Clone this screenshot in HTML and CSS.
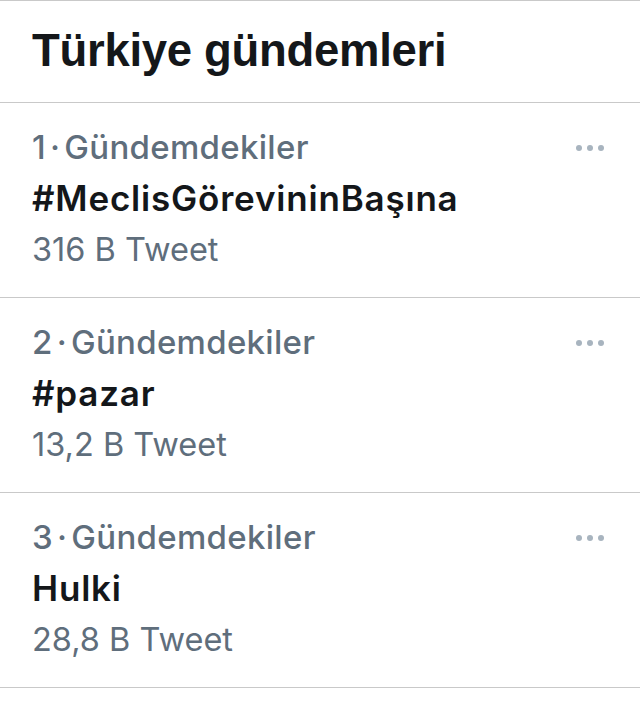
FILE: index.html
```html
<!DOCTYPE html>
<html lang="tr">
<head>
<meta charset="utf-8">
<link rel="stylesheet" href="styles.css">
</head>
<body>
<div class="panel">
  <header class="head">
    <h1 class="title">Türkiye gündemleri</h1>
  </header>
  <div class="trend">
    <div class="meta">1<span class="dot">·</span>Gündemdekiler</div>
    <div class="name">#MeclisGörevininBaşına</div>
    <div class="count">316 B Tweet</div>
    <span class="more"><i></i><i></i><i></i></span>
  </div>
  <div class="trend">
    <div class="meta">2<span class="dot">·</span>Gündemdekiler</div>
    <div class="name">#pazar</div>
    <div class="count">13,2 B Tweet</div>
    <span class="more"><i></i><i></i><i></i></span>
  </div>
  <div class="trend">
    <div class="meta">3<span class="dot">·</span>Gündemdekiler</div>
    <div class="name">Hulki</div>
    <div class="count">28,8 B Tweet</div>
    <span class="more"><i></i><i></i><i></i></span>
  </div>
</div>
</body>
</html>
```

FILE: styles.css
```css
html, body {
  margin: 0;
  padding: 0;
  background: #ffffff;
}
.panel {
  width: 640px;
  border-top: 1px solid #c9c9c9;
}
.head {
  display: flex;
  align-items: center;
  padding-left: 32px;
  border-bottom: 1px solid #c9c9c9;
  box-sizing: border-box;
  height: 102px;
}
.title {
  margin: 0;
  font-family: "Liberation Sans", Arial, sans-serif;
  font-weight: 700;
  font-size: 45.5px;
  color: #14171a;
  letter-spacing: -0.3px;
  line-height: 1;
  transform: translateY(-1px);
}
.trend {
  position: relative;
  height: 195px;
  box-sizing: border-box;
  border-bottom: 1px solid #c9c9c9;
  padding: 19px 0 0 32px;
  font-family: Inter, "Noto Sans", sans-serif;
  font-size: 33px;
  line-height: 51px;
}
.meta, .count {
  color: #5f6e7c;
}
.meta {
  font-weight: 500;
  letter-spacing: 0.3px;
}
.meta .dot {
  margin: 0 4px;
}
.name {
  color: #14171a;
  font-weight: 600;
  font-size: 35px;
  letter-spacing: 0.8px;
}
.count {
  font-size: 32.5px;
}
.more {
  position: absolute;
  right: 36px;
  top: 42px;
  display: flex;
  gap: 5px;
}
.more i {
  width: 6px;
  height: 6px;
  border-radius: 50%;
  background: #a8b4bf;
}
```
